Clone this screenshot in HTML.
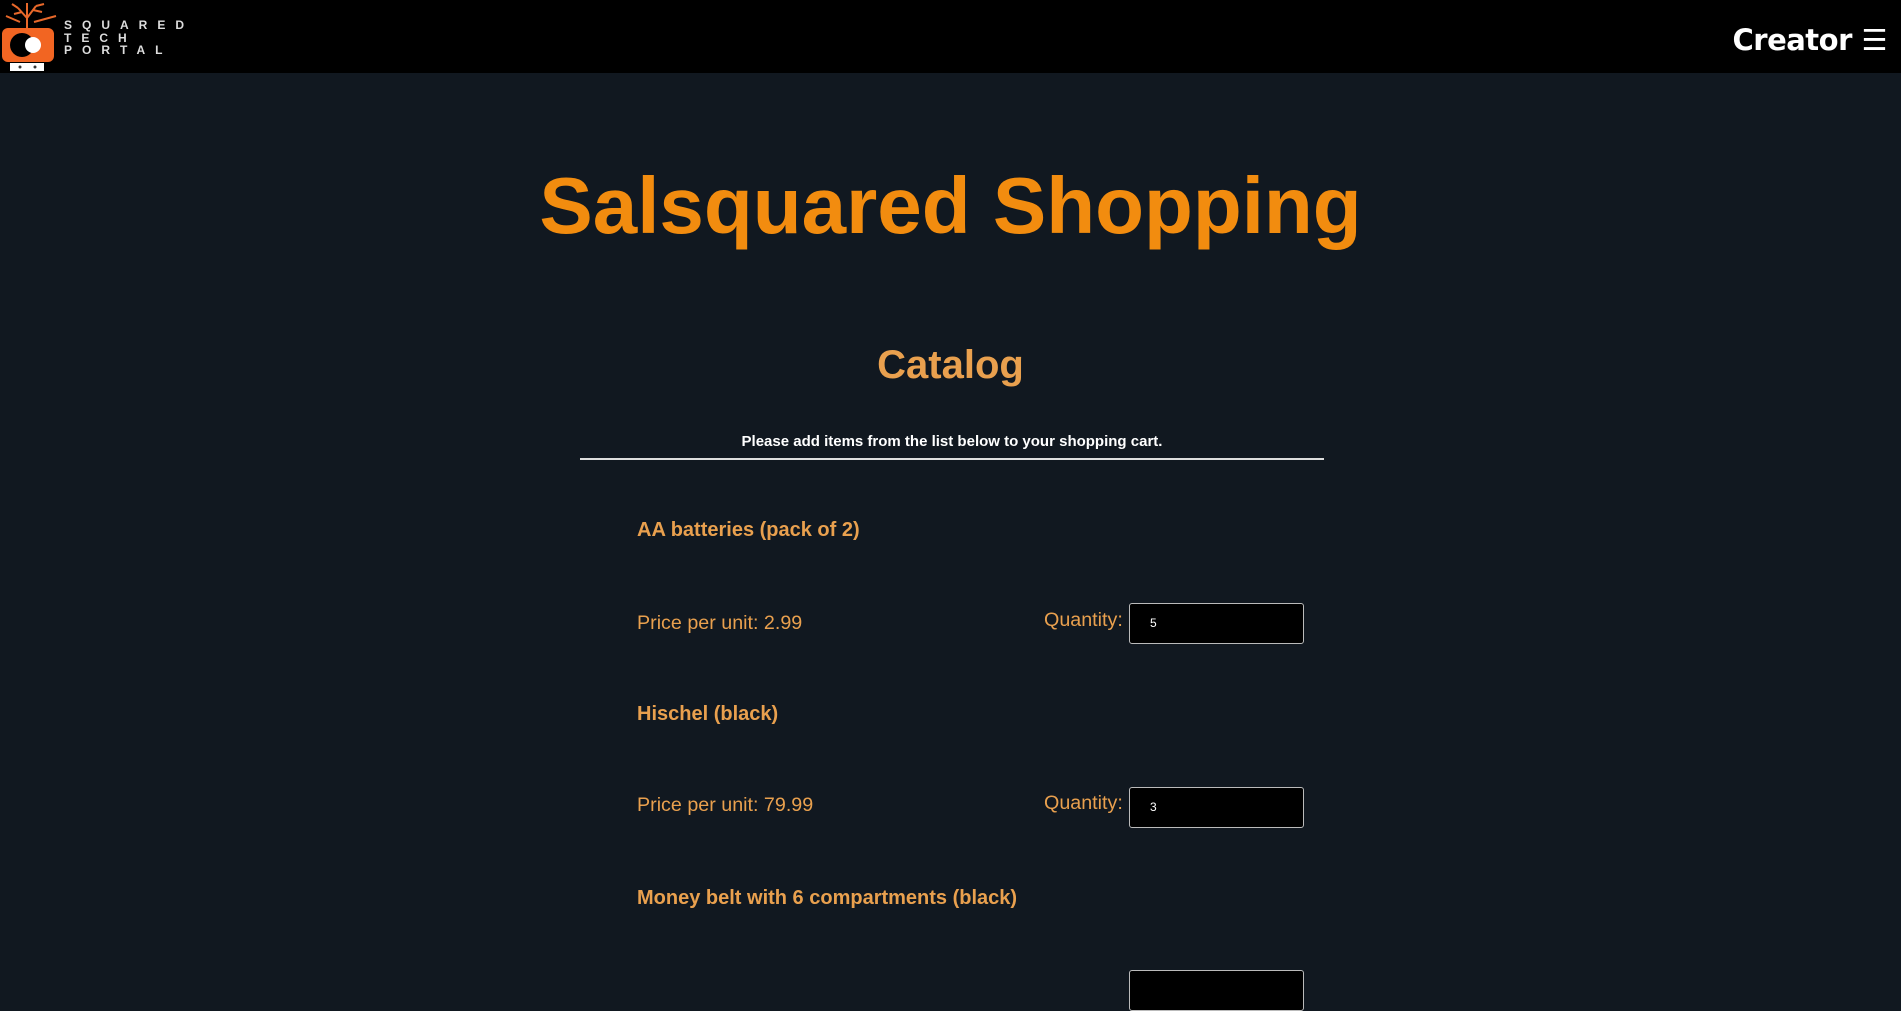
<!DOCTYPE html>
<html><head><meta charset="utf-8"><style>
*{margin:0;padding:0;box-sizing:border-box}
body{width:1901px;height:980px;overflow:hidden;background:#111820;font-family:"Liberation Sans",Arial,sans-serif;position:relative}
.hdr{position:absolute;left:0;top:0;width:1901px;height:73px;background:#000}
.creator{position:absolute;right:14px;top:23px;color:#fff;font-weight:bold;font-size:29px;font-family:"DejaVu Sans","Liberation Sans",sans-serif;letter-spacing:-0.5px}
.logo-t{position:absolute;left:64px;top:19px;color:#ddd;font-size:12px;font-weight:bold;letter-spacing:10px;line-height:12.5px}
.abs{position:absolute}
h1{position:absolute;left:0;width:1901px;text-align:center;top:156px;font-size:80px;color:#f28c0f;font-weight:bold;line-height:100px}
h2{position:absolute;left:0;width:1901px;text-align:center;top:342px;font-size:40px;color:#e9a04e;font-weight:bold;line-height:46px}
.note{position:absolute;left:580px;width:744px;text-align:center;top:433px;color:#fff;font-size:15px;font-weight:bold}
.hr{position:absolute;left:580px;width:744px;top:458px;height:2px;background:#ddd}
.it{position:absolute;left:637px;color:#e9a04e;font-weight:bold;font-size:20px}
.pr{position:absolute;left:637px;color:#e9a04e;font-size:19.7px}
.ql{position:absolute;left:1044px;color:#e9a04e;font-size:19.7px}
.in{position:absolute;left:1129px;width:175px;height:41px;background:#000;border:1px solid #bbb;border-radius:3px;color:#fff;font-size:12px;padding:12px 0 0 20px}
</style></head><body>
<div class="hdr">
<svg class="abs" style="left:0;top:0" width="62" height="73" viewBox="0 0 62 73">
<g stroke="#e8682a" stroke-width="2" fill="none"><path d="M27 28 L27 14 M27 18 L18 8 M27 18 L36 6 M22 12 L14 14 M33 10 L42 12 M27 14 L27 3 M18 8 L12 4 M36 6 L44 4 M20 22 L6 16 M34 22 L56 16"/></g>
<rect x="2" y="28" width="52" height="34" rx="6" fill="#f26522"/>
<circle cx="22" cy="45" r="12" fill="#000"/>
<circle cx="33" cy="45" r="8" fill="#fff"/>
<rect x="10" y="63" width="34" height="8" fill="#fff"/>
<circle cx="20" cy="67" r="1.5" fill="#333"/><circle cx="35" cy="67" r="1.5" fill="#333"/>
</svg>
<div class="logo-t">SQUARED<br>TECH<br>PORTAL</div>
<div class="creator">Creator ☰</div>
</div>
<h1>Salsquared Shopping</h1>
<h2>Catalog</h2>
<div class="note">Please add items from the list below to your shopping cart.</div>
<div class="hr"></div>

<div class="it" style="top:519px">AA batteries (pack of 2)</div>
<div class="pr" style="top:612px">Price per unit: 2.99</div>
<div class="ql" style="top:609px">Quantity:</div>
<div class="in" style="top:603px">5</div>

<div class="it" style="top:703px">Hischel (black)</div>
<div class="pr" style="top:794px">Price per unit: 79.99</div>
<div class="ql" style="top:792px">Quantity:</div>
<div class="in" style="top:787px">3</div>

<div class="it" style="top:887px">Money belt with 6 compartments (black)</div>
<div class="in" style="top:970px"></div>
</body></html>
